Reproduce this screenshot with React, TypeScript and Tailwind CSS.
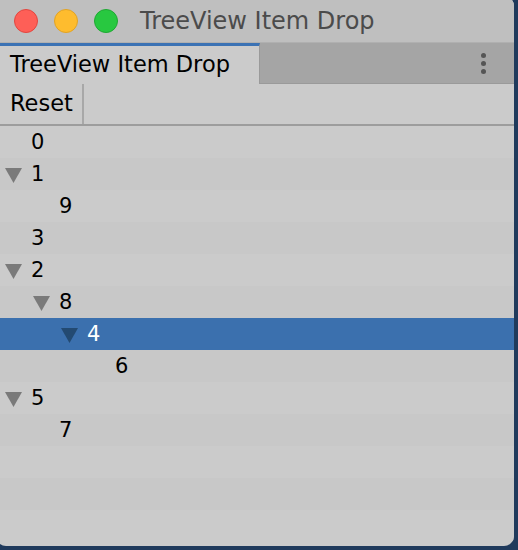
import React from 'react';

type Row = { label: string; depth: number; expanded?: boolean; selected?: boolean };

const rows: Row[] = [
  { label: '0', depth: 0 },
  { label: '1', depth: 0, expanded: true },
  { label: '9', depth: 1 },
  { label: '3', depth: 0 },
  { label: '2', depth: 0, expanded: true },
  { label: '8', depth: 1, expanded: true },
  { label: '4', depth: 2, expanded: true, selected: true },
  { label: '6', depth: 3 },
  { label: '5', depth: 0, expanded: true },
  { label: '7', depth: 1 },
];

const Arrow: React.FC<{ selected?: boolean }> = ({ selected }) => (
  <svg width="17" height="15" viewBox="0 0 17 15" className="absolute top-[10px]" style={{ left: -26 }}>
    <path d="M0 0 H17 L8.5 15 Z" fill={selected ? '#234a72' : '#7a7a7a'} />
  </svg>
);

const TreeRow: React.FC<{ row?: Row; index: number }> = ({ row, index }) => {
  const base = index % 2 === 0 ? 'bg-[#cbcbcb]' : 'bg-[#c8c8c8]';
  const bg = row?.selected ? 'bg-[#3b70ae] text-white' : `${base} text-black`;
  return (
    <div className={`h-[32px] flex items-center ${bg}`}>
      {row && (
        <div className="relative h-full flex items-center" style={{ marginLeft: 35 + row.depth * 28 }}>
          {row.expanded && <Arrow selected={row.selected} />}
          <span className="text-[21px] leading-none">{row.label}</span>
        </div>
      )}
    </div>
  );
};

export default function App() {
  const empty = 3;
  return (
    <div className="w-[518px] h-[550px] bg-[#1f3a5c] overflow-hidden" style={{ fontFamily: '"DejaVu Sans", "Liberation Sans", sans-serif' }}>
      <div className="-ml-[4px] -mt-[4px] w-[518px] h-[550px] rounded-[10px] overflow-hidden bg-[#cbcbcb] flex flex-col">
        {/* title bar */}
        <div className="h-[46px] shrink-0 bg-[#bfbfbf] flex items-center pt-[3px] pl-[18px]">
          <div className="flex items-center gap-[16px]">
            <span className="w-[24px] h-[24px] rounded-full bg-[#fe5f57] border border-[#e2463f]" />
            <span className="w-[24px] h-[24px] rounded-full bg-[#febc2e] border border-[#e1a325]" />
            <span className="w-[24px] h-[24px] rounded-full bg-[#28c840] border border-[#1fa833]" />
          </div>
          <span className="ml-[22px] text-[24px] text-[#4b4b4b]">TreeView Item Drop</span>
        </div>
        {/* tab strip */}
        <div className="h-[42px] shrink-0 bg-[#a5a5a5] border-t border-[#b0b0b0] flex items-stretch">
          <div className="w-[264px] bg-[#cbcbcb] border-t-[3px] border-[#3b72b4] border-r border-r-[#9a9a9a] pl-[14px] flex items-center">
            <span className="text-[22.5px] text-black">TreeView Item Drop</span>
          </div>
          <div className="flex-1 border-b border-[#9a9a9a] flex items-center justify-end pr-[28px]">
            <div className="flex flex-col gap-[3px]">
              <span className="w-[5px] h-[5px] rounded-full bg-[#555]" />
              <span className="w-[5px] h-[5px] rounded-full bg-[#555]" />
              <span className="w-[5px] h-[5px] rounded-full bg-[#555]" />
            </div>
          </div>
        </div>
        {/* toolbar */}
        <div className="h-[42px] shrink-0 bg-[#cbcbcb] border-b-2 border-[#9d9d9d] flex items-stretch">
          <div className="w-[88px] border-r-2 border-[#a8a8a8] pl-[14px] flex items-center">
            <span className="text-[22.5px] text-black">Reset</span>
          </div>
        </div>
        {/* tree */}
        <div className="flex-1 flex flex-col">
          {rows.map((r, i) => (
            <TreeRow key={r.label} row={r} index={i} />
          ))}
          {Array.from({ length: empty }).map((_, i) => (
            <TreeRow key={`e${i}`} index={rows.length + i} />
          ))}
        </div>
      </div>
    </div>
  );
}
